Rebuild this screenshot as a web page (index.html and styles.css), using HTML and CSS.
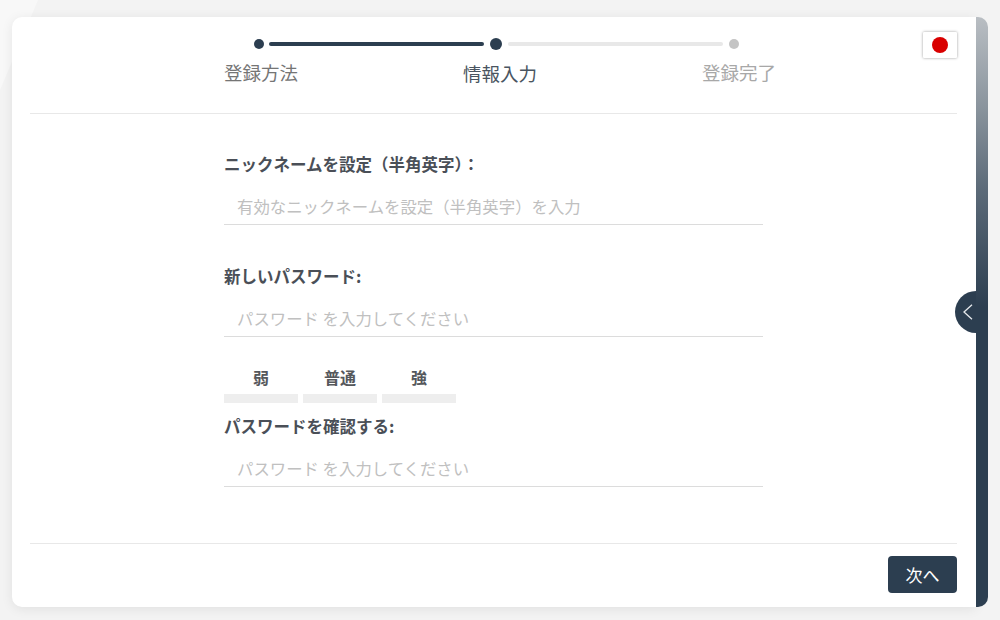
FILE: index.html
```html
<!DOCTYPE html>
<html lang="ja">
<head>
<meta charset="utf-8">
<title>登録</title>
<link rel="stylesheet" href="styles.css">
</head>
<body>
<div class="bg-shape"></div>
<div class="shell">
  <main class="card">
    <header class="head">
      <div class="steps">
        <div class="track">
          <span class="dot"></span>
          <span class="bar bar-done"></span>
          <span class="dot dot-current"></span>
          <span class="bar"></span>
          <span class="dot dot-todo"></span>
        </div>
        <div class="labels">
          <span class="label">登録方法</span>
          <span class="label label-current">情報入力</span>
          <span class="label label-todo">登録完了</span>
        </div>
      </div>
      <button class="flag" type="button" aria-label="日本語"><span class="flag-sun"></span></button>
    </header>
    <form class="form">
      <div class="field">
        <label class="field-label">ニックネームを設定（半角英字）：</label>
        <input class="field-input" placeholder="有効なニックネームを設定（半角英字）を入力">
      </div>
      <div class="field field-password">
        <label class="field-label">新しいパスワード:</label>
        <input class="field-input" type="password" placeholder="パスワード を入力してください">
      </div>
      <div class="strength">
        <div class="level"><span class="level-name">弱</span><span class="level-bar"></span></div>
        <div class="level"><span class="level-name">普通</span><span class="level-bar"></span></div>
        <div class="level"><span class="level-name">強</span><span class="level-bar"></span></div>
      </div>
      <div class="field field-confirm">
        <label class="field-label">パスワードを確認する:</label>
        <input class="field-input" type="password" placeholder="パスワード を入力してください">
      </div>
    </form>
    <footer class="foot">
      <button class="next" type="button">次へ</button>
    </footer>
  </main>
  <aside class="rail">
    <button class="handle" type="button" aria-label="閉じる">
      <svg width="12" height="16" viewBox="0 0 12 16" fill="none" stroke="#e6e9ec" stroke-width="1.3"><path d="M10 .8 2 8l8 7.200"/></svg>
    </button>
  </aside>
</div>
</body>
</html>
```
FILE: styles.css
```css
* { box-sizing: border-box; }
html, body { margin: 0; height: 100%; }
body {
  background: #f3f3f3;
  font-family: "Noto Sans CJK JP", "Noto Sans", sans-serif;
  overflow: hidden;
  position: relative;
}
.bg-shape {
  position: absolute;
  left: 0;
  top: 0;
  width: 40px;
  height: 90px;
  background: #f8f8f8;
  clip-path: polygon(0 0, 38px 0, 0 90px);
}
.shell {
  position: relative;
  display: flex;
  height: 620px;
  padding: 17px 12px 13px;
}
.card {
  width: 964px;
  background: #fff;
  border-radius: 10px 0 0 10px;
  box-shadow: 0 2px 12px rgba(0, 0, 0, .08);
  padding: 0 19px 0 18px;
  display: flex;
  flex-direction: column;
}
.rail {
  position: relative;
  width: 12px;
  border-radius: 0 10px 10px 0;
  background: linear-gradient(180deg, #b9bec3 0, #8a949d 90px, #5d6b79 170px, #2c3e50 290px);
}
.handle {
  position: absolute;
  right: 12px;
  top: 274px;
  width: 21px;
  height: 42px;
  padding: 0 0 0 7px;
  border: 0;
  border-radius: 21px 0 0 21px;
  background: #2c3e50;
  display: flex;
  align-items: center;
}
.head {
  position: relative;
  height: 97px;
  border-bottom: 1px solid #e8e8e8;
  padding-left: 194px;
}
.steps { width: 552px; padding-top: 21px; }
.track {
  display: flex;
  align-items: center;
  height: 12px;
  padding-left: 30px;
}
.dot { width: 10px; height: 10px; border-radius: 50%; background: #2c3e50; flex: none; }
.dot-current { width: 12px; height: 12px; margin: 0 6px; }
.dot-todo { background: #c4c4c4; margin-left: 6px; }
.bar { width: 215px; height: 4px; border-radius: 2px; background: #e8e8e8; flex: none; }
.bar-done { background: #2c3e50; margin-left: 5px; }
.labels { display: flex; justify-content: space-between; margin-top: 9px; }
.label { font-size: 18.500px; line-height: 26px; color: #757575; }
.label-current { color: #4a5561; margin-top: 1px; }
.label-todo { color: #a8a8a8; }
.flag {
  position: absolute;
  right: 0;
  top: 15px;
  width: 34px;
  height: 26px;
  padding: 0;
  border: 0;
  border-radius: 1px;
  background: #fff;
  box-shadow: 0 0 3px rgba(0, 0, 0, .4);
  display: flex;
  align-items: center;
  justify-content: center;
}
.flag-sun { width: 16px; height: 16px; border-radius: 50%; background: #d90000; }
.form { flex: 1; padding: 38px 0 0 194px; }
.field { width: 539px; }
.field-password { margin-top: 39px; }
.field-confirm { margin-top: 11px; }
.field-label { display: block; font-size: 16.500px; line-height: 24px; font-weight: 700; color: #4a4f57; }
.field-input {
  display: block;
  width: 100%;
  height: 41px;
  margin-top: 8px;
  padding: 3px 13px 0;
  border: 0;
  border-bottom: 1px solid #dcdcdc;
  outline: 0;
  font: 16.400px "Noto Sans CJK JP", sans-serif;
  background: transparent;
}
.field-input::placeholder { color: #c0c0c0; opacity: 1; }
.strength { display: flex; gap: 5px; margin-top: 28px; }
.level { width: 74px; display: flex; flex-direction: column; align-items: center; }
.level-name { font-size: 16px; line-height: 24px; font-weight: 700; color: #55585c; }
.level-bar { display: block; width: 100%; height: 9px; margin-top: 5px; background: #eee; }
.foot {
  height: 64px;
  border-top: 1px solid #e8e8e8;
  display: flex;
  justify-content: flex-end;
  padding-top: 12px;
}
.next {
  width: 69px;
  height: 37px;
  border: 0;
  border-radius: 4px;
  background: #2c3e50;
  color: #fff;
  font: 17px "Noto Sans CJK JP", sans-serif;
  padding: 0;
}
```
